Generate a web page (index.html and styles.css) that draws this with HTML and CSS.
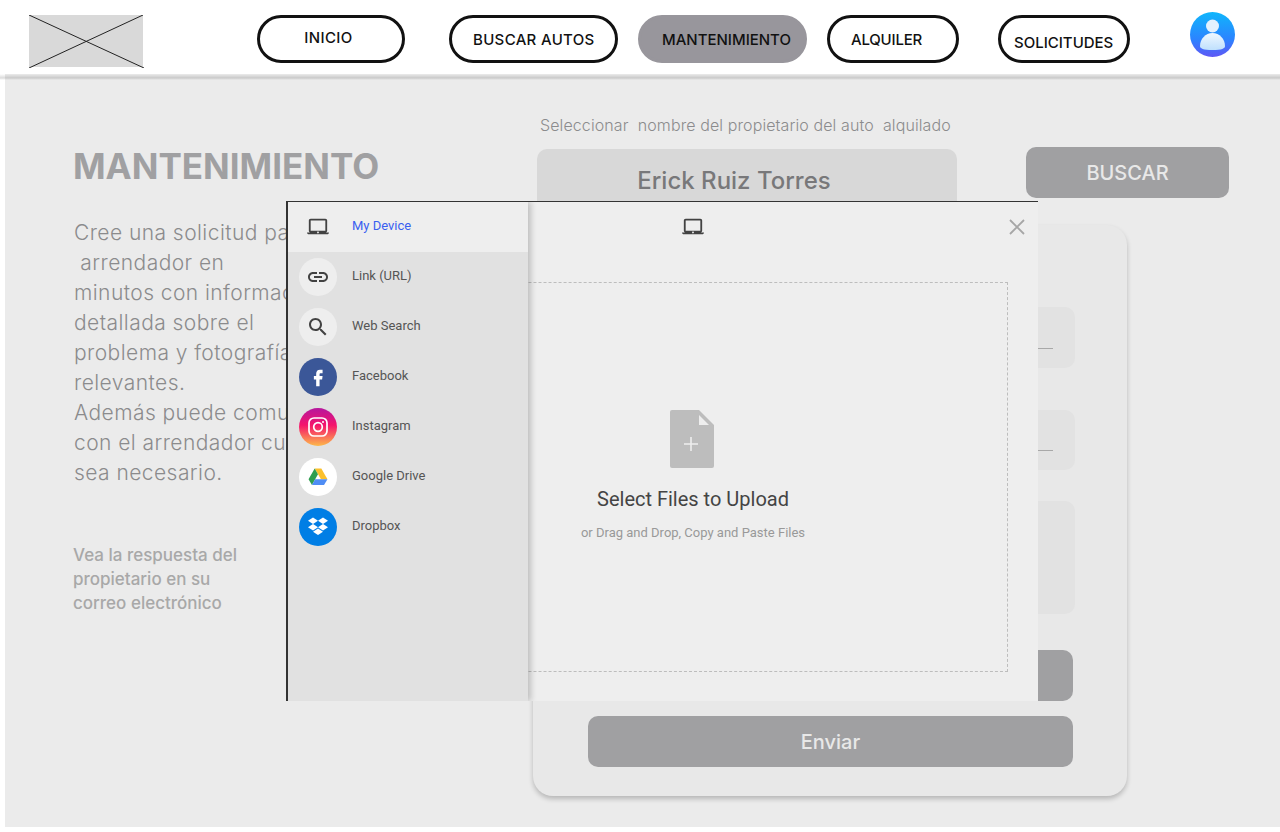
FILE: index.html
```html
<!DOCTYPE html>
<html lang="es">
<head>
    <meta charset="UTF-8">
    <meta name="viewport" content="width=device-width, initial-scale=1.0">
    <title>Mantenimiento</title>
    <link rel="stylesheet" href="styles.css">
</head>
<body>
    <header class="topbar">
        <svg class="logo" width="115" height="53" viewBox="0 0 115 53">
            <rect x="0" y="0" width="114" height="52" fill="#d9d9d9"/>
            <path d="M0 0L115 53M114 0L0 53" stroke="#222" stroke-width="1" fill="none"/>
        </svg>
        <nav class="nav">
            <a class="pill pill-inicio">INICIO</a>
            <a class="pill pill-buscar">BUSCAR AUTOS</a>
            <a class="pill pill-mant">MANTENIMIENTO</a>
            <a class="pill pill-alquiler">ALQUILER</a>
            <a class="pill pill-solicitudes">SOLICITUDES</a>
        </nav>
        <svg class="avatar" width="45" height="45" viewBox="0 0 45 45">
            <defs>
                <linearGradient id="avatarBg" x1="0" y1="0" x2="0" y2="1">
                    <stop offset="0" stop-color="#0fb6fc"/>
                    <stop offset="0.6" stop-color="#2b84ff"/>
                    <stop offset="1" stop-color="#5f57f5"/>
                </linearGradient>
                <linearGradient id="avatarBody" x1="0" y1="0" x2="0" y2="1">
                    <stop offset="0" stop-color="#f0f8ff"/>
                    <stop offset="1" stop-color="#bfe0fd"/>
                </linearGradient>
            </defs>
            <circle cx="22.5" cy="22.5" r="22.5" fill="url(#avatarBg)"/>
            <circle cx="22.5" cy="14" r="6.5" fill="#e3f1fe"/>
            <path d="M22.5 21c7 0 12.500 6 12.500 13 0 2.500-3 4-12.500 4s-12.500-1.500-12.500-4c0-7 5.500-13 12.500-13z" fill="url(#avatarBody)"/>
        </svg>
    </header>

    <main class="content">
        <section class="intro">
            <h1>MANTENIMIENTO</h1>
            <p class="lead">Cree una solicitud para el<br>&nbsp;arrendador en<br>minutos con información<br>detallada sobre el<br>problema y fotografías<br>relevantes.<br>Además puede comunicarse<br>con el arrendador cuando<br>sea necesario.</p>
            <p class="note">Vea la respuesta del<br>propietario en su<br>correo electrónico</p>
        </section>

        <section class="request">
            <p class="owner-label">Seleccionar&nbsp; nombre del propietario del auto&nbsp; alquilado</p>
            <div class="owner-row">
                <div class="owner-name">Erick Ruiz Torres</div>
                <button class="btn btn-search">BUSCAR</button>
            </div>
            <div class="card">
                <div class="field field-one"></div>
                <div class="field field-two"></div>
                <div class="field field-area"></div>
                <button class="btn btn-wide btn-photo"></button>
                <button class="btn btn-wide btn-send">Enviar</button>
            </div>
        </section>
    </main>

    <div class="picker">
        <aside class="sources">
            <div class="source active">
                <span class="source-icon plain">
                    <svg width="22" height="22" viewBox="0 0 24 24"><path fill="#424242" d="M20 18c1.100 0 1.990-.9 1.990-2L22 5c0-1.100-.9-2-2-2H4c-1.100 0-2 .9-2 2v11c0 1.100.9 2 2 2H0c0 1.100.9 2 2 2h20c1.100 0 2-.9 2-2h-4zM4 5h16v11H4V5zm8 14c-.55 0-1-.45-1-1s.45-1 1-1 1 .45 1 1-.45 1-1 1z"/></svg>
                </span>
                <span class="source-name">My Device</span>
            </div>
            <div class="source">
                <span class="source-icon light">
                    <svg width="24" height="24" viewBox="0 0 24 24"><path fill="#424242" d="M3.900 12c0-1.710 1.390-3.100 3.100-3.100h4V7H7c-2.760 0-5 2.240-5 5s2.240 5 5 5h4v-1.900H7c-1.710 0-3.100-1.390-3.100-3.100zM8 13h8v-2H8v2zm9-6h-4v1.900h4c1.710 0 3.100 1.390 3.100 3.100s-1.390 3.100-3.100 3.100h-4V17h4c2.760 0 5-2.240 5-5s-2.240-5-5-5z"/></svg>
                </span>
                <span class="source-name">Link (URL)</span>
            </div>
            <div class="source">
                <span class="source-icon light">
                    <svg width="24" height="24" viewBox="0 0 24 24"><path fill="#424242" d="M15.500 14h-.79l-.28-.27C15.410 12.590 16 11.110 16 9.500 16 5.910 13.090 3 9.500 3S3 5.910 3 9.500 5.910 16 9.500 16c1.610 0 3.090-.59 4.230-1.570l.27.28v.79l5 4.990L20.490 19l-4.990-5zm-6 0C7.010 14 5 11.990 5 9.500S7.010 5 9.500 5 14 7.010 14 9.500 11.990 14 9.500 14z"/></svg>
                </span>
                <span class="source-name">Web Search</span>
            </div>
            <div class="source">
                <span class="source-icon facebook">
                    <svg width="22" height="22" viewBox="0 0 24 24"><path fill="#fff" d="M14.500 8H17V4h-2.800C11.500 4 10 5.800 10 8.400V11H7.500v3.600H10V22h3.700v-7.400h2.800l.5-3.600h-3.300V9c0-.6.300-1 .8-1z"/></svg>
                </span>
                <span class="source-name">Facebook</span>
            </div>
            <div class="source">
                <span class="source-icon instagram">
                    <svg width="22" height="22" viewBox="0 0 22 22" fill="none" stroke="#fff" stroke-width="1.700">
                        <rect x="2" y="2" width="18" height="18" rx="5"/>
                        <circle cx="11" cy="11" r="4.300"/>
                        <circle cx="16" cy="6" r="1" fill="#fff" stroke="none"/>
                    </svg>
                </span>
                <span class="source-name">Instagram</span>
            </div>
            <div class="source">
                <span class="source-icon drive">
                    <svg width="20" height="18" viewBox="0 0 22 20">
                        <polygon points="7.300,0.500 14.700,0.500 21.500,12.500 14.300,12.500" fill="#fbc02d"/>
                        <polygon points="7.300,0.500 11,7 4.300,19 0.500,12.500" fill="#2e9e4f"/>
                        <polygon points="7.800,12.500 21.500,12.500 17.700,19 4.300,19" fill="#4f8df5"/>
                    </svg>
                </span>
                <span class="source-name">Google Drive</span>
            </div>
            <div class="source">
                <span class="source-icon dropbox">
                    <svg width="22" height="22" viewBox="0 0 22 22" fill="#fff">
                        <polygon points="6,1.500 11,4.700 6,8 1,4.700"/>
                        <polygon points="16,1.500 21,4.700 16,8 11,4.700"/>
                        <polygon points="6,8 11,11.300 6,14.600 1,11.300"/>
                        <polygon points="16,8 21,11.300 16,14.600 11,11.300"/>
                        <polygon points="11,12.400 16,15.700 11,19 6,15.700"/>
                    </svg>
                </span>
                <span class="source-name">Dropbox</span>
            </div>
        </aside>
        <div class="upload">
            <div class="upload-head">
                <svg width="22" height="22" viewBox="0 0 24 24"><path fill="#424242" d="M20 18c1.100 0 1.990-.9 1.990-2L22 5c0-1.100-.9-2-2-2H4c-1.100 0-2 .9-2 2v11c0 1.100.9 2 2 2H0c0 1.100.9 2 2 2h20c1.100 0 2-.9 2-2h-4zM4 5h16v11H4V5zm8 14c-.55 0-1-.45-1-1s.45-1 1-1 1 .45 1 1-.45 1-1 1z"/></svg>
                <svg class="close" width="18" height="18" viewBox="0 0 18 18"><path d="M2 2L16 16M16 2L2 16" stroke="#a6a6a6" stroke-width="1.800" fill="none"/></svg>
            </div>
            <div class="dropzone">
                <svg class="file-icon" width="44" height="58" viewBox="0 0 44 58">
                    <path fill="#bdbdbd" d="M2 0h27l15 15v41a2 2 0 0 1-2 2H2a2 2 0 0 1-2-2V2a2 2 0 0 1 2-2z"/>
                    <path fill="#eeeeee" d="M29 5l10 10H29z"/>
                    <path stroke="#eeeeee" stroke-width="1.600" d="M21 27v14M14 34h14" fill="none"/>
                </svg>
                <div class="drop-title">Select Files to Upload</div>
                <div class="drop-hint">or Drag and Drop, Copy and Paste Files</div>
            </div>
        </div>
    </div>
</body>
</html>
```

FILE: styles.css
```css
* {
    box-sizing: border-box;
}
html, body {
    margin: 0;
    height: 832px;
    overflow: hidden;
}
body {
    position: relative;
    background-color: #fff;
    font-family: Inter, "Open Sans", sans-serif;
}

/* top bar */
.topbar {
    position: relative;
    z-index: 1;
    display: flex;
    height: 74px;
    margin-left: 5px;
    padding-left: 24px;
    background-color: #fff;
}
.topbar::after {
    content: "";
    position: absolute;
    left: -5px;
    right: 0;
    top: 74px;
    height: 6px;
    background: linear-gradient(rgba(0, 0, 0, 0), rgba(0, 0, 0, 0.14) 65%, rgba(0, 0, 0, 0));
}
.logo {
    margin-top: 15px;
}
.nav {
    display: flex;
    margin-left: 113px;
    margin-top: 15px;
}
.pill {
    height: 48px;
    border: 3px solid #111;
    border-radius: 24px;
    font-size: 15px;
    font-weight: 500;
    line-height: 44px;
    color: #111;
    white-space: nowrap;
}
.pill-inicio {
    width: 148px;
    margin-right: 44px;
    padding-right: 5px;
    letter-spacing: 0.4px;
    text-align: center;
    line-height: 40px;
}
.pill-buscar {
    width: 169px;
    margin-right: 20px;
    padding-left: 21px;
    letter-spacing: 0.33px;
}
.pill-mant {
    width: 169px;
    margin-right: 20px;
    padding-left: 21px;
    border-color: #98969c;
    background-color: #98969c;
}
.pill-alquiler {
    width: 132px;
    margin-right: 39px;
    padding-left: 21px;
    letter-spacing: -0.2px;
}
.pill-solicitudes {
    width: 132px;
    padding-left: 13px;
    line-height: 50px;
}
.avatar {
    margin-left: 60px;
    margin-top: 12px;
}

/* page body */
.content {
    display: flex;
    height: 753px;
    margin-left: 5px;
    background-color: #ebebeb;
}
.intro {
    width: 460px;
    padding: 66px 0 0 68px;
    color: #8b8b8d;
}
h1 {
    margin: 0;
    font-size: 35px;
    line-height: 52px;
    font-weight: 700;
    color: #a0a0a2;
}
.lead {
    margin: 26px 0 0 1px;
    font-size: 21px;
    line-height: 30px;
    font-weight: 300;
    letter-spacing: 0.44px;
    white-space: nowrap;
}
.note {
    margin: 55px 0 0;
    font-size: 17px;
    line-height: 24px;
    font-weight: 500;
    color: #a8a8a8;
}
.request {
    padding-left: 68px;
}
.owner-label {
    margin: 41px 0 0 7px;
    font-size: 16px;
    line-height: 20px;
    font-weight: 300;
    letter-spacing: 0.1px;
    color: #8b8b8d;
    white-space: nowrap;
}
.owner-row {
    display: flex;
    align-items: flex-start;
    margin: 14px 0 0 4px;
}
.owner-name {
    width: 420px;
    height: 70px;
    padding: 14px 26px 0 0;
    border-radius: 10px;
    background-color: #d8d8d8;
    color: #78787a;
    font-size: 24px;
    font-weight: 500;
    line-height: 36px;
    text-align: center;
}
.btn {
    display: block;
    border: none;
    border-radius: 10px;
    background-color: #a0a0a2;
    color: #e8e8e8;
    font-family: inherit;
    font-weight: 500;
}
.btn-search {
    width: 203px;
    height: 51px;
    margin: -2px 0 0 69px;
    font-size: 20px;
}

/* form card, most of it sits under the picker */
.card {
    width: 594px;
    height: 571px;
    margin-top: 6px;
    padding: 82px 52px 0 55px;
    border-radius: 20px;
    background-color: #e8e8e8;
    box-shadow: 0 3px 5px rgba(0, 0, 0, 0.22);
}
.field {
    position: relative;
    width: 487px;
    border-radius: 10px;
    background-color: #e2e2e2;
}
.field-one {
    height: 61px;
}
.field-two {
    height: 60px;
    margin-top: 42px;
}
.field-area {
    height: 113px;
    margin-top: 31px;
}
.field-one::after, .field-two::after {
    content: "";
    position: absolute;
    left: 20px;
    right: 22px;
    bottom: 19px;
    border-bottom: 1px solid #a8a8a8;
}
.btn-wide {
    width: 485px;
    height: 51px;
    font-size: 20px;
}
.btn-photo {
    margin-top: 36px;
}
.btn-send {
    margin-top: 15px;
}

/* file picker overlay */
.picker {
    position: absolute;
    z-index: 2;
    left: 286px;
    top: 201px;
    display: flex;
    width: 752px;
    height: 500px;
    overflow: hidden;
    border-top: 1px solid #333;
    border-left: 2px solid #333;
    font-family: Roboto, Arial, sans-serif;
}
.sources {
    position: relative;
    z-index: 1;
    flex: none;
    width: 240px;
    background-color: #e1e1e1;
    box-shadow: 3px 0 6px rgba(0, 0, 0, 0.2);
}
.source {
    display: flex;
    align-items: center;
    height: 50px;
    padding: 0 0 1px 11px;
    font-size: 13px;
    color: #555;
}
.source.active {
    background-color: #eee;
    color: #3a5ff0;
}
.source-icon {
    display: flex;
    flex: none;
    align-items: center;
    justify-content: center;
    width: 38px;
    height: 38px;
    margin-right: 15px;
    border-radius: 50%;
}
.source-name {
    margin-bottom: 2px;
}
.source-icon.light {
    background-color: #eee;
}
.source-icon.facebook {
    background-color: #3b5798;
}
.source-icon.instagram {
    background: linear-gradient(#b5179e, #f5146c 45%, #fdb94a);
}
.source-icon.drive {
    background-color: #fff;
}
.source-icon.dropbox {
    background-color: #007ee5;
}
.upload {
    flex: none;
    width: 690px;
    margin-left: -180px;
    padding: 0 30px;
    background-color: #eee;
}
.upload-head {
    position: relative;
    display: flex;
    justify-content: center;
    align-items: center;
    height: 80px;
    padding-bottom: 31px;
}
.close {
    position: absolute;
    right: -18px;
    top: 16px;
}
.dropzone {
    display: flex;
    flex-direction: column;
    align-items: center;
    height: 390px;
    padding-top: 127px;
    border: 1px dashed #bdbdbd;
}
.file-icon {
    margin-right: 2px;
}
.drop-title {
    margin-top: 19px;
    font-size: 20px;
    line-height: 24px;
    color: #444;
}
.drop-hint {
    margin-top: 14px;
    font-size: 13px;
    line-height: 16px;
    color: #999;
}
```
